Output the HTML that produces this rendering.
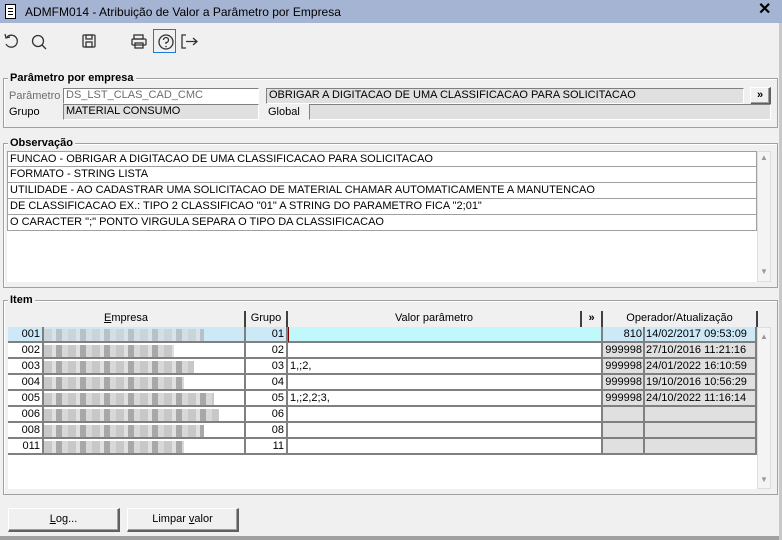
<!DOCTYPE html><html><head><style>
body{margin:0;width:782px;height:540px;background:#f0f0f0;font-family:"Liberation Sans",sans-serif;font-size:11px;position:relative;overflow:hidden;color:#000}
div{position:absolute;box-sizing:border-box}
.t{white-space:nowrap;line-height:14px}
.grp{border:1px solid #a0a0a0;box-shadow:inset 1px 1px 0 #fff}
.lg{background:#f0f0f0;font-weight:bold;font-size:11px;padding:0 2px;line-height:12px}
.in{border-top:1px solid #808080;border-left:1px solid #808080;border-bottom:1px solid #fff;border-right:1px solid #fff;padding-left:2px;line-height:13px;white-space:nowrap;overflow:hidden}
.ob{background:#fff;border:1px solid #a0a0a0;border-top:none;left:7px;width:750px;height:16px;padding-left:2px;line-height:15px;white-space:nowrap}
.c{border-right:2px solid #808080;border-bottom:2px solid #808080;height:16px;line-height:14px;white-space:nowrap;overflow:hidden}
.h{background:#f0f0f0;border-right:2px solid #404040;height:16px;line-height:15px;text-align:center;white-space:nowrap}
.btn{background:#f0f0f0;border:1px solid #fff;border-right:2px solid #606060;border-bottom:2px solid #606060;box-shadow:inset -1px -1px 0 #a0a0a0;text-align:center;line-height:20px}
.sb{background:#f4f4f4;border:1px solid #ddd}
.blur{background:repeating-linear-gradient(90deg,#c8c8c8 0 8px,#e0e0e0 8px 12px,#a8a8a8 12px 18px,#d8d8d8 18px 24px);height:12px;top:2px}
</style></head><body>
<div style="left:0;top:0;width:782px;height:23px;background:#a5b4d3"></div>
<div style="left:5px;top:4px;width:11px;height:15px;border:1px solid #000;background:#fff"><div style="left:2px;top:3px;width:5px;height:1px;background:#000;box-shadow:0 3px 0 #000,0 6px 0 #000"></div></div>
<div class="t" style="left:25px;top:5px;font-size:12px">ADMFM014 - Atribuição de Valor a Parâmetro por Empresa</div>
<div class="t" style="left:758px;top:3px;font-size:16px;font-weight:bold">✕</div>
<svg style="position:absolute;left:0;top:28px" width="200" height="28">
<g fill="none" stroke="#333" stroke-width="1.3">
<path d="M7 9 A6 6 0 1 1 6 16"/><path d="M5 6 L6 10 L10 9"/>
<circle cx="38" cy="13" r="5.5"/><path d="M42 17 L46 21"/>
<rect x="83" y="7" width="12" height="12" rx="1"/><rect x="86" y="7" width="6" height="4"/><rect x="86" y="14" width="6" height="5"/>
<rect x="134" y="7" width="9" height="4"/><rect x="132" y="11" width="14" height="6" rx="1"/><rect x="135" y="15" width="8" height="5"/>
<circle cx="166" cy="14" r="7"/><path d="M163.5 12 A2.5 2.5 0 1 1 166 14.5 L166 16"/>
<path d="M186 7 L182 7 L182 20 L186 20"/><path d="M186 13.5 L197 13.5 M193 10 L197 13.5 L193 17"/>
</g><rect x="153.5" y="1.5" width="22" height="23" fill="none" stroke="#1a7ad4"/>
<circle cx="166" cy="18.5" r=".8" fill="#333"/></svg>

<div class="grp" style="left:3px;top:78px;width:775px;height:50px"></div>
<div class="lg" style="left:8px;top:72px">Parâmetro por empresa</div>
<div class="t" style="left:9px;top:89px;color:#6d6d6d">Parâmetro</div>
<div class="in" style="left:63px;top:88px;width:196px;height:16px;background:#fff;color:#6d6d6d">DS_LST_CLAS_CAD_CMC</div>
<div class="in" style="left:266px;top:88px;width:478px;height:16px;background:#e0e0e0">OBRIGAR A DIGITACAO DE UMA CLASSIFICACAO PARA SOLICITACAO</div>
<div class="btn" style="left:750px;top:87px;width:21px;height:18px;line-height:15px;font-weight:bold">»</div>
<div class="t" style="left:9px;top:105px">Grupo</div>
<div class="in" style="left:63px;top:104px;width:196px;height:16px;background:#e0e0e0">MATERIAL CONSUMO</div>
<div class="t" style="left:268px;top:105px">Global</div>
<div class="in" style="left:309px;top:104px;width:462px;height:16px;background:#e0e0e0"></div>

<div class="grp" style="left:3px;top:143px;width:775px;height:145px"></div>
<div class="lg" style="left:8px;top:137px">Observação</div>
<div style="left:7px;top:151px;width:750px;height:131px;background:#fff"></div>
<div class="ob" style="top:151px;border-top:1px solid #a0a0a0">FUNCAO - OBRIGAR A DIGITACAO DE UMA CLASSIFICACAO PARA SOLICITACAO</div>
<div class="ob" style="top:167px">FORMATO - STRING LISTA</div>
<div class="ob" style="top:183px">UTILIDADE - AO CADASTRAR UMA SOLICITACAO DE MATERIAL CHAMAR AUTOMATICAMENTE A MANUTENCAO</div>
<div class="ob" style="top:199px">DE CLASSIFICACAO EX.: TIPO 2 CLASSIFICAO "01" A STRING DO PARAMETRO FICA "2;01"</div>
<div class="ob" style="top:215px">O CARACTER ";" PONTO VIRGULA SEPARA O TIPO DA CLASSIFICACAO</div>
<div class="sb" style="left:757px;top:151px;width:14px;height:131px"></div>
<div class="t" style="left:760px;top:151px;font-size:8px;color:#999">▲</div>
<div class="t" style="left:760px;top:265px;font-size:8px;color:#999">▼</div>

<div class="grp" style="left:3px;top:300px;width:775px;height:195px"></div>
<div class="lg" style="left:8px;top:294px">Item</div>
<div style="left:8px;top:311px;width:749px;height:178px;background:#fff"></div>
<div class="h" style="left:8px;top:311px;width:238px"><u>E</u>mpresa</div>
<div class="h" style="left:246px;top:311px;width:42px">Grupo</div>
<div class="h" style="left:288px;top:311px;width:294px">Valor parâmetro</div>
<div class="h" style="left:582px;top:311px;width:21px;font-weight:bold">»</div>
<div class="h" style="left:603px;top:311px;width:155px">Operador/Atualização</div>
<div class="sb" style="left:757px;top:327px;width:14px;height:162px"></div>
<div class="t" style="left:760px;top:330px;font-size:8px;color:#999">▲</div>
<div class="t" style="left:760px;top:473px;font-size:8px;color:#999">▼</div>
<div id="rows"></div>
<script>
var d=[["001","01","","810","14/02/2017 09:53:09"],["002","02","","999998","27/10/2016 11:21:16"],["003","03","1,;2,","999998","24/01/2022 16:10:59"],["004","04","","999998","19/10/2016 10:56:29"],["005","05","1,;2,2;3,","999998","24/10/2022 11:16:14"],["006","06","","",""],["008","08","","",""],["011","11","","",""]];
var w=[160,130,150,140,170,175,160,140],h="";
d.forEach(function(r,i){var y=327+i*16,sel=i==0;var b1=sel?"#cde8f6":"#fff",b3=sel?"#c0f8fc":"#fff",b4=sel?"#cde8f6":"#e0e0e0";
h+='<div class="c" style="left:8px;top:'+y+'px;width:36px;text-align:right;padding-right:2px;background:'+b1+'">'+r[0]+'</div>';
h+='<div class="c" style="left:44px;top:'+y+'px;width:202px;background:'+b1+'"><div class="blur" style="left:0;width:'+w[i]+'px;opacity:'+(sel?.6:1)+'"></div></div>';
h+='<div class="c" style="left:246px;top:'+y+'px;width:42px;text-align:right;padding-right:2px;background:'+b1+'">'+r[1]+'</div>';
h+='<div class="c" style="left:288px;top:'+y+'px;width:315px;padding-left:2px;background:'+b3+(sel?';border-left:1px solid #800000':'')+'">'+r[2]+'</div>';
h+='<div class="c" style="left:603px;top:'+y+'px;width:42px;text-align:right;padding-right:1px;background:'+b4+'">'+r[3]+'</div>';
h+='<div class="c" style="left:645px;top:'+y+'px;width:112px;padding-left:1px;background:'+b4+'">'+r[4]+'</div>';});
document.getElementById("rows").outerHTML=h;
</script>
<div class="btn" style="left:8px;top:508px;width:112px;height:24px"><u>L</u>og...</div>
<div class="btn" style="left:127px;top:508px;width:112px;height:24px">Limpar <u>v</u>alor</div>
<div style="left:0;top:536px;width:782px;height:4px;background:#a0a0a0"></div>
<div style="left:779px;top:23px;width:3px;height:517px;background:#c8c8c8"></div>
</body></html>
